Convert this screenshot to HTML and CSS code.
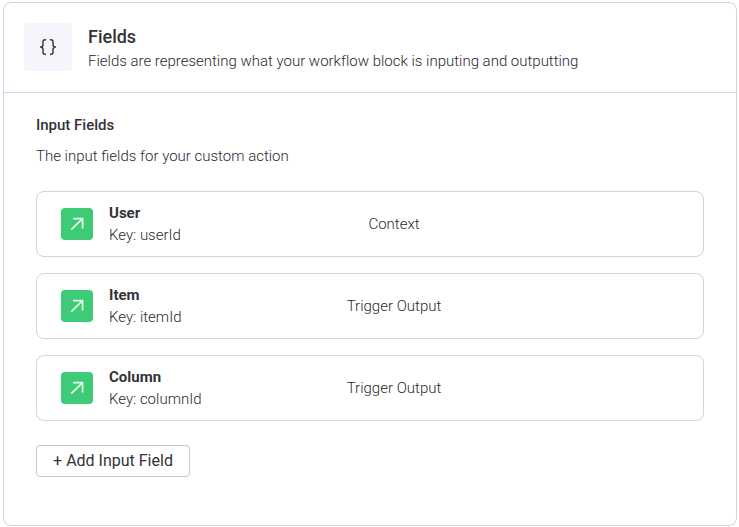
FILE: index.html
```html
<!DOCTYPE html>
<html lang="en">
<head>
<meta charset="utf-8">
<title>Fields</title>
<link rel="stylesheet" href="styles.css">
</head>
<body>
<main class="panel">
  <header class="panel-header">
    <div class="panel-icon"><svg viewBox="0 0 48 48"><path d="M22 16.7h-.8q-2.2 0-2.2 2v3q0 2.3-2.8 2.3 2.8 0 2.8 2.3v3q0 2 2.2 2h.8M26 16.7h.8q2.2 0 2.2 2v3q0 2.3 2.8 2.3-2.8 0-2.8 2.3v3q0 2-2.2 2H26"/></svg></div>
    <div class="heading">
      <h1>Fields</h1>
      <p class="subtitle">Fields are representing what your workflow block is inputing and outputting</p>
    </div>
  </header>
  <section class="content">
    <h2>Input Fields</h2>
    <p class="description">The input fields for your custom action</p>
    <div class="list">
      <article class="field">
        <div class="tile"><svg viewBox="0 0 32 32"><path d="M10.3 21.7 21.5 10.7M12 10.6h9.6v9.8"/></svg></div>
        <div class="info"><h3>User</h3><p>Key: userId</p></div>
        <div class="source">Context</div>
      </article>
      <article class="field">
        <div class="tile"><svg viewBox="0 0 32 32"><path d="M10.3 21.7 21.5 10.7M12 10.6h9.6v9.8"/></svg></div>
        <div class="info"><h3>Item</h3><p>Key: itemId</p></div>
        <div class="source">Trigger Output</div>
      </article>
      <article class="field">
        <div class="tile"><svg viewBox="0 0 32 32"><path d="M10.3 21.7 21.5 10.7M12 10.6h9.6v9.8"/></svg></div>
        <div class="info"><h3>Column</h3><p>Key: columnId</p></div>
        <div class="source">Trigger Output</div>
      </article>
    </div>
    <button class="add">+ Add Input Field</button>
  </section>
</main>
</body>
</html>
```
FILE: styles.css
```css
* { box-sizing: border-box; }
body { margin: 0; background: #fff; color: #292a30; font-family: Roboto, sans-serif; font-size: 15px; font-weight: 300; }
h1, h2, h3, p { margin: 0; }
h1, h2, h3 { color: #323338; }
.panel { width: 734px; height: 524px; margin: 2px 0 0 3px; border: 1px solid #d0d1e5; border-radius: 8px; }
.panel-header { display: flex; align-items: flex-start; gap: 16px; height: 90px; padding: 20px 20px 0; border-bottom: 1px solid #d0d1e5; }
.panel-icon { width: 48px; height: 48px; border-radius: 4px; background: #f5f6fb; }
.panel-icon svg { display: block; width: 48px; height: 48px; fill: none; stroke: #323338; stroke-width: 1.4; }
.heading { padding-top: 2px; }
h1 { font-size: 18px; font-weight: 500; line-height: 24px; }
.subtitle { line-height: 24px; letter-spacing: -0.006px; }
.content { padding: 20px 32px; }
h2 { font-size: 15px; font-weight: 500; line-height: 24px; }
.description { margin-top: 7px; line-height: 24px; }
.list { display: grid; gap: 16px; margin-top: 23px; }
.field { display: grid; grid-template-columns: 48px 184px 202px; align-items: center; height: 66px; padding: 0 24px; border: 1px solid #d0d1e5; border-radius: 8px; }
.tile { width: 32px; height: 32px; border-radius: 4px; background: #3ecb75; }
.tile svg { display: block; width: 32px; height: 32px; fill: none; stroke: #e4fbed; stroke-width: 1.7; }
.info { line-height: 22px; }
h3 { font-size: 15px; font-weight: 700; line-height: 22px; }
.source { text-align: center; }
.add { display: block; width: 154px; height: 32px; margin-top: 24px; padding: 0 0 2px; border: 1px solid #c3c6d4; border-radius: 4px; background: #fff; color: #323338; font: 400 16px Roboto, sans-serif; }
```
